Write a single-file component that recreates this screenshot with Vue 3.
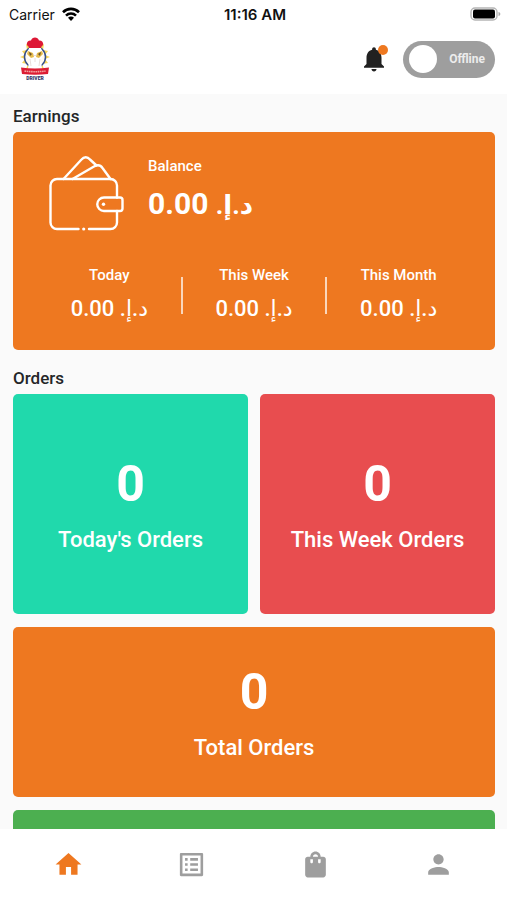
<script setup>
import { ref } from 'vue';

const online = ref(false);
const activeTab = ref('home');

// trailing mark keeps the last dot on the left side of the dirham sign
const currency = 'د.إ.\u200f';

const formatMoney = (value) => value.toFixed(2);

const balance = ref(0);

const earnings = ref([
  { label: 'Today', amount: 0 },
  { label: 'This Week', amount: 0 },
  { label: 'This Month', amount: 0 },
]);

const orders = ref([
  { label: "Today's Orders", count: 0, type: 'today' },
  { label: 'This Week Orders', count: 0, type: 'week' },
  { label: 'Total Orders', count: 0, type: 'total' },
]);

const tabs = [
  { id: 'home', label: 'Home', icon: 'M10 20v-6h4v6h5v-8h3L12 3 2 12h3v8z' },
  {
    id: 'orders',
    label: 'Orders',
    icon: 'M19 5v14H5V5h14m1.1-2H3.9c-.5 0-.9.4-.9.9v16.2c0 .4.4.9.9.9h16.2c.4 0 .9-.5.9-.9V3.9c0-.5-.5-.9-.9-.9zM11 7h6v2h-6V7zm0 4h6v2h-6v-2zm0 4h6v2h-6zM7 7h2v2H7zm0 4h2v2H7zm0 4h2v2H7z',
  },
  {
    id: 'bag',
    label: 'Pickups',
    icon: 'M18 6h-2c0-2.21-1.79-4-4-4S8 3.79 8 6H6c-1.1 0-2 .9-2 2v12c0 1.1.9 2 2 2h12c1.1 0 2-.9 2-2V8c0-1.1-.9-2-2-2zm-8 4c0 .55-.45 1-1 1s-1-.45-1-1V8h2v2zm2-6c1.1 0 2 .9 2 2h-4c0-1.1.9-2 2-2zm4 6c0 .55-.45 1-1 1s-1-.45-1-1V8h2v2z',
  },
  {
    id: 'profile',
    label: 'Profile',
    icon: 'M12 12c2.21 0 4-1.79 4-4s-1.79-4-4-4-4 1.79-4 4 1.79 4 4 4zm0 2c-2.67 0-8 1.34-8 4v2h16v-2c0-2.66-5.33-4-8-4z',
  },
];
</script>

<template>
  <div class="app">
    <div class="status-bar">
      <div class="carrier">
        <span>Carrier</span>
        <svg class="wifi" viewBox="0 0 18 14" aria-hidden="true">
          <g fill="none" stroke="#000" stroke-width="2.6">
            <path d="M1 5.2a11.4 11.4 0 0 1 16 0" />
            <path d="M4 8.6a7.1 7.1 0 0 1 10 0" />
          </g>
          <path d="M9 14l-3-3.2a4.2 4.2 0 0 1 6 0z" />
        </svg>
      </div>
      <span class="time">11:16 AM</span>
      <svg class="battery" viewBox="0 0 31 14" aria-hidden="true">
        <rect x="1" y="1" width="26" height="12" rx="4" fill="#fff" stroke="#b5b5b5" stroke-width="1.4" />
        <rect x="3" y="2.5" width="22" height="9" rx="2" />
        <path d="M28.5 5c1.2.4 1.8 1.1 1.8 2s-.6 1.6-1.8 2z" fill="#aaa" />
      </svg>
    </div>

    <header class="header">
      <svg class="logo" viewBox="0 0 30 44" role="img" aria-label="Driver">
        <path
          d="M15 5l3 5 6-3-1 6 5 1-3 4 5 2-5 2 3 4-6 1 2 5H6l2-5-6-1 3-4-5-2 5-2-3-4 5-1-1-6 6 3z"
          fill="#f8d65a"
        />
        <circle cx="15" cy="20" r="10.5" fill="#fffaf0" stroke="#36508c" stroke-width="1.5" />
        <path d="M9 11h12l2 7-2 5 1 9H8l1-9-2-5z" fill="#fff" />
        <path d="M8 14l5 2 1 4-3 1-4-4zM22 14l-5 2-1 4 3 1 4-4z" fill="#e6bb4c" />
        <path d="M9 15l3 2-2 2zM21 15l-3 2 2 2z" fill="#66502a" />
        <path d="M13 17l2 2 2-2M10 22l1 7M20 22l-1 7M15 21v4" fill="none" stroke="#e2d5d0" stroke-width=".8" />
        <path d="M9 10C5 8 7 3 11 3.500c1-4 7-4 8 0 4-.5 6 4.500 2 6.500v1H9z" fill="#dd1835" />
        <path d="M1 30.500c9 1.400 19 1.400 28 0l-1 6.500c-9 1-17 1-26 0z" fill="#dc1c33" />
        <path d="M4.500 34.100c7 .8 14 .8 21 0" fill="none" stroke="#f2a5a0" stroke-width="1.600" stroke-dasharray="1.600 .6" />
        <text x="15" y="43" text-anchor="middle">DRIVER</text>
      </svg>

      <div class="header-actions">
        <button type="button" class="bell" aria-label="Notifications">
          <svg viewBox="0 0 24 24" aria-hidden="true">
            <path d="M12 22c1.1 0 2-.9 2-2h-4c0 1.1.89 2 2 2zm6-6v-5c0-3.07-1.64-5.64-4.500-6.320V4c0-.83-.67-1.500-1.500-1.500s-1.500.67-1.500 1.500v.68C7.630 5.360 6 7.920 6 11v5l-2 2v1h16v-1l-2-2z" />
          </svg>
          <span class="bell-dot"></span>
        </button>

        <label class="toggle" :class="{ online }">
          <input v-model="online" type="checkbox" role="switch" />
          <span class="knob"></span>
          <span class="toggle-text">{{ online ? 'Online' : 'Offline' }}</span>
        </label>
      </div>
    </header>

    <main class="content">
      <h2 class="section-title">Earnings</h2>
      <section class="earnings">
        <div class="balance">
          <svg class="wallet" viewBox="0 0 75 75" aria-hidden="true">
            <g fill="none" stroke="#fff" stroke-width="2.400" stroke-linecap="round" stroke-linejoin="round">
              <path d="M29.500 73H8a6.500 6.500 0 0 1-6.500-6.500V29.500A6.500 6.500 0 0 1 8 23h53.500a6.500 6.500 0 0 1 6.500 6.500v12" />
              <path d="M68 55v11.500a6.500 6.500 0 0 1-6.500 6.500H40" />
              <path d="M55 41.500h16a2.500 2.500 0 0 1 2.500 2.500v8.500A2.500 2.500 0 0 1 71 55H55a6.750 6.750 0 0 1 0-13.500z" />
              <path d="M14.500 23L32.500 3.500c2.500-3 6-3 8.500 0l6.500 6" />
              <path d="M23.500 23L45 10.500c3.500-2 6.500-1.500 8.500 1.500l8 11" />
            </g>
            <circle cx="54.500" cy="48.200" r="1.700" fill="#fff" />
            <circle cx="34.700" cy="73" r="1.600" fill="#fff" />
          </svg>
          <div>
            <p class="label">Balance</p>
            <p class="balance-amount">{{ formatMoney(balance) }} <span class="currency">{{ currency }}</span></p>
          </div>
        </div>

        <div class="periods">
          <div v-for="item in earnings" :key="item.label" class="period">
            <p class="label">{{ item.label }}</p>
            <p class="period-amount">{{ formatMoney(item.amount) }} {{ currency }}</p>
          </div>
        </div>
      </section>

      <h2 class="section-title">Orders</h2>
      <section class="orders">
        <div v-for="order in orders" :key="order.type" class="order-card" :class="order.type">
          <p class="order-count">{{ order.count }}</p>
          <p class="order-label">{{ order.label }}</p>
        </div>
        <div class="order-card completed"></div>
      </section>
    </main>

    <nav class="tab-bar">
      <button
        v-for="tab in tabs"
        :key="tab.id"
        type="button"
        class="tab"
        :class="{ active: activeTab === tab.id }"
        :aria-label="tab.label"
        @click="activeTab = tab.id"
      >
        <svg viewBox="0 0 24 24" aria-hidden="true"><path :d="tab.icon" /></svg>
      </button>
    </nav>
  </div>
</template>

<style>
body {
  background: #fafafa;
}
</style>

<style scoped>
.app {
  display: flex;
  flex-direction: column;
  height: 100vh;
  font-family: Roboto, "DejaVu Sans", sans-serif;
  color: #242628;
}

p,
h2 {
  margin: 0;
}

button {
  border: none;
  background: none;
  padding: 0;
  cursor: pointer;
}

.status-bar {
  display: grid;
  grid-template-columns: 1fr auto 1fr;
  align-items: center;
  height: 28px;
  flex-shrink: 0;
  padding: 0 6px 0 9px;
  background: white;
  font-family: Inter, sans-serif;
  font-size: 14px;
  color: #111;
}

.carrier {
  display: flex;
  align-items: center;
  gap: 7px;
}

.wifi {
  width: 18px;
  height: 14px;
}

.time {
  font-size: 15px;
  font-weight: 600;
}

.battery {
  width: 31px;
  height: 14px;
  justify-self: end;
}

.header {
  display: flex;
  align-items: center;
  justify-content: space-between;
  height: 66px;
  flex-shrink: 0;
  padding: 0 12px 4px 20px;
  box-sizing: border-box;
  background: white;
}

.logo {
  width: 30px;
  height: 44px;
}

.logo text {
  font-size: 5px;
  font-weight: 900;
  fill: #2b3166;
}

.header-actions {
  display: flex;
  align-items: center;
  gap: 14px;
}

.bell {
  position: relative;
  width: 30px;
  height: 30px;
}

.bell svg {
  display: block;
  fill: #212121;
}

.bell-dot {
  position: absolute;
  top: 1px;
  right: 1px;
  width: 10px;
  height: 10px;
  border-radius: 50%;
  background: #ee7820;
}

.toggle {
  position: relative;
  display: flex;
  align-items: center;
  justify-content: space-between;
  width: 92px;
  height: 37px;
  padding: 0 10px 0 6px;
  box-sizing: border-box;
  border-radius: 99px;
  background: #9e9e9e;
  cursor: pointer;
}

.toggle.online {
  flex-direction: row-reverse;
  padding: 0 6px 0 10px;
  background: #4caf50;
}

.toggle input {
  position: absolute;
  inset: 0;
  width: 100%;
  height: 100%;
  margin: 0;
  opacity: 0;
  cursor: pointer;
}

.knob {
  width: 28px;
  height: 28px;
  border-radius: 50%;
  background: white;
}

.toggle-text {
  font-size: 12px;
  font-weight: 700;
  color: #ececec;
}

.content {
  flex: 1;
  min-height: 0;
  overflow-y: auto;
  scrollbar-width: none;
  padding: 10px 12px 12px 13px;
  background: #fafafa;
}

.section-title {
  margin-bottom: 4px;
  font-size: 17px;
  font-weight: 500;
  line-height: 24px;
}

.earnings {
  margin-bottom: 16px;
  padding: 24px 24px 27px;
  border-radius: 5px;
  background: #ee7820;
  color: white;
}

.balance {
  display: flex;
  align-items: flex-start;
  gap: 24px;
  margin-bottom: 34px;
  padding-left: 12px;
}

.wallet {
  width: 75px;
  height: 75px;
}

.label {
  margin-bottom: 10px;
  font-size: 15px;
  font-weight: 500;
  line-height: 20px;
}

.balance-amount {
  font-size: 30px;
  font-weight: 700;
  line-height: 36px;
}

.currency {
  font-size: 26px;
}

.periods {
  display: grid;
  grid-template-columns: repeat(3, 1fr);
}

.period {
  position: relative;
  text-align: center;
}

.period + .period::before {
  content: '';
  position: absolute;
  left: -1px;
  top: 12px;
  width: 2px;
  height: 37px;
  background: rgba(255, 255, 255, 0.7);
}

.period-amount {
  font-size: 22px;
  font-weight: 500;
  line-height: 28px;
}

.orders {
  display: grid;
  grid-template-columns: 1fr 1fr;
  gap: 13px 12px;
}

.order-card {
  padding: 60px 8px;
  border-radius: 5px;
  color: white;
  text-align: center;
}

.order-card.today {
  background: #20d9ac;
}

.order-card.week {
  background: #e84d4f;
}

.order-card.total,
.order-card.completed {
  grid-column: 1 / -1;
  padding: 35px 8px;
}

.order-card.total {
  background: #ee7820;
}

.order-card.completed {
  min-height: 100px;
  background: #4caf50;
}

.order-count {
  margin-bottom: 12px;
  font-size: 50px;
  font-weight: 700;
  line-height: 60px;
}

.order-label {
  font-size: 22px;
  font-weight: 500;
  line-height: 28px;
}

.tab-bar {
  display: flex;
  flex-shrink: 0;
  height: 71px;
  padding: 0 7px;
  background: white;
}

.tab {
  flex: 1;
  display: flex;
  align-items: center;
  justify-content: center;
}

.tab svg {
  width: 31px;
  height: 31px;
  fill: #9e9e9e;
}

.tab.active svg {
  fill: #ee7820;
}
</style>
